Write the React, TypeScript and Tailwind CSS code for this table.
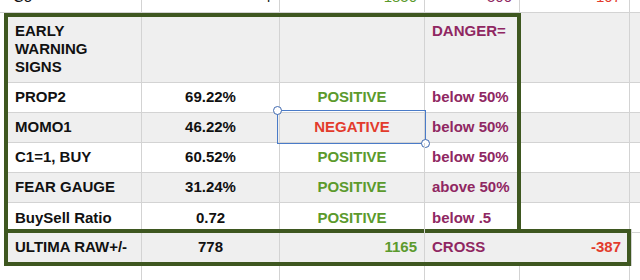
import React from "react";

const GREEN = "text-[#5b9a2c]";
const MAROON = "text-[#8f2762]";
const RED = "text-[#e33b2c]";

type Row = {
	label: string;
	value: string;
	signal: string;
	danger: string;
	gray: boolean;
	selected?: boolean;
};

const rows: Row[] = [
	{ label: "PROP2", value: "69.22%", signal: "POSITIVE", danger: "below 50%", gray: false },
	{ label: "MOMO1", value: "46.22%", signal: "NEGATIVE", danger: "below 50%", gray: true, selected: true },
	{ label: "C1=1, BUY", value: "60.52%", signal: "POSITIVE", danger: "below 50%", gray: false },
	{ label: "FEAR GAUGE", value: "31.24%", signal: "POSITIVE", danger: "above 50%", gray: true },
	{ label: "BuySell Ratio", value: "0.72", signal: "POSITIVE", danger: "below .5", gray: false },
];

const SignalRow = ({ row, last }: { row: Row; last: boolean }) => {
	const bg = row.gray ? "bg-[#efefef]" : "bg-white";
	const line = last ? "" : "border-b border-[#d3d3d3]";
	return (
		<div className={`flex h-[30px] ${bg} ${line}`}>
			<div className="w-[134px] flex items-center pl-[7px] border-r border-[#d3d3d3]">
				{row.label}
			</div>
			<div className="w-[138px] flex items-center justify-center border-r border-[#d3d3d3]">
				{row.value}
			</div>
			<div className="relative w-[145px] flex items-center justify-center border-r border-[#d3d3d3]">
				<span className={row.signal === "NEGATIVE" ? RED : GREEN}>{row.signal}</span>
				{row.selected && (
					<div className="absolute left-[-3px] top-[-3px] right-[-2px] bottom-[-2px] border border-[#4a7bc8]">
						<div className="absolute left-[-5px] top-[-5px] w-[9px] h-[9px] rounded-full border-[1.5px] border-[#3f69b0] bg-white" />
						<div className="absolute right-[-5px] bottom-[-5px] w-[9px] h-[9px] rounded-full border-[1.5px] border-[#3f69b0] bg-white" />
					</div>
				)}
			</div>
			<div className={`w-[92px] flex items-center pl-[7px] ${MAROON}`}>{row.danger}</div>
		</div>
	);
};

export default function App() {
	return (
		<div className="w-[640px] h-[280px] overflow-hidden bg-white text-[15px] text-[#111] font-['Liberation_Sans',Arial,sans-serif]">
			{/* row cut off at the top */}
			<div className="flex h-[30px] mt-[-17px] border-b border-[#d3d3d3]">
				<div className="w-[142px] flex items-center pl-[13px] border-r border-[#d3d3d3]">Co</div>
				<div className="w-[138px] flex items-center justify-end pr-[8px] border-r border-[#d3d3d3]">4</div>
				<div className={`w-[145px] flex items-center justify-end pr-[7px] border-r border-[#d3d3d3] ${GREEN}`}>1850</div>
				<div className={`w-[95px] flex items-center justify-end pr-[7px] border-r border-[#d3d3d3] ${MAROON}`}>500</div>
				<div className={`w-[110px] flex items-center justify-end pr-[8px] border-r border-[#d3d3d3] ${RED}`}>107</div>
				<div className="flex-1" />
			</div>

			{/* early warning box + spare columns */}
			<div className="flex font-bold">
				<div className="ml-[4px] w-[517px] border-l-4 border-t-4 border-r-4 border-[#3e5720]">
					<div className="flex h-[66px] bg-[#efefef] border-b border-[#d3d3d3] leading-[18px]">
						<div className="w-[134px] pl-[7px] pt-[5px] border-r border-[#d3d3d3]">
							EARLY
							<br />
							WARNING
							<br />
							SIGNS
						</div>
						<div className="w-[138px] border-r border-[#d3d3d3]" />
						<div className="w-[145px] border-r border-[#d3d3d3]" />
						<div className={`w-[92px] pl-[7px] pt-[5px] ${MAROON}`}>DANGER=</div>
					</div>
					{rows.map((row, i) => (
						<SignalRow key={row.label} row={row} last={i === rows.length - 1} />
					))}
				</div>
				<div className="flex-1 flex flex-col">
					<div className="flex h-[70px] bg-[#efefef] border-b border-[#d3d3d3]">
						<div className="w-[109px] border-r border-[#d3d3d3]" />
					</div>
					{rows.map((row) => (
						<div
							key={row.label}
							className={`flex h-[30px] border-b border-[#d3d3d3] ${row.gray ? "bg-[#efefef]" : "bg-white"}`}
						>
							<div className="w-[109px] border-r border-[#d3d3d3]" />
						</div>
					))}
				</div>
			</div>

			{/* ultima row */}
			<div className="flex">
				<div className="ml-[4px] w-[627px] mt-[-4px] border-4 border-[#3e5720] bg-[#efefef] font-bold flex h-[37px]">
					<div className="w-[134px] flex items-center pl-[7px] border-r border-[#d3d3d3]">ULTIMA RAW+/-</div>
					<div className="w-[138px] flex items-center justify-center border-r border-[#d3d3d3]">778</div>
					<div className={`w-[145px] flex items-center justify-end pr-[7px] border-r border-[#d3d3d3] ${GREEN}`}>1165</div>
					<div className={`w-[92px] flex items-center pl-[7px] ${MAROON}`}>CROSS</div>
					<div className={`flex-1 flex items-center justify-end pr-[6px] ${RED}`}>-387</div>
				</div>
				<div className="flex-1 border-l border-[#d3d3d3] mt-[-4px]" />
			</div>

			{/* empty row below */}
			<div className="flex h-[20px]">
				<div className="w-[142px] border-r border-[#d3d3d3]" />
				<div className="w-[138px] border-r border-[#d3d3d3]" />
				<div className="w-[145px] border-r border-[#d3d3d3]" />
				<div className="w-[95px] border-r border-[#d3d3d3]" />
				<div className="w-[110px] border-r border-[#d3d3d3]" />
			</div>
		</div>
	);
}
